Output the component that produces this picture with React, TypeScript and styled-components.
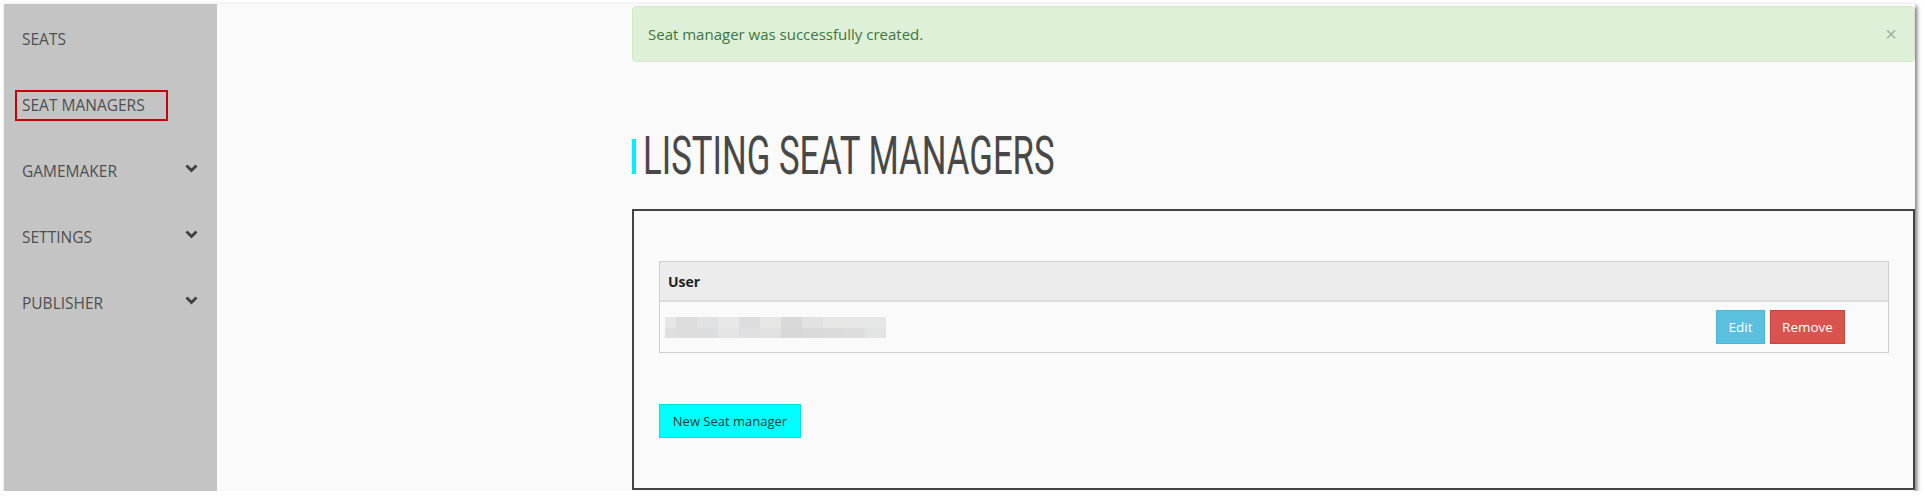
import React from "react";
import styled, { createGlobalStyle } from "styled-components";

const Global = createGlobalStyle`
  html, body { margin: 0; padding: 0; background: #ffffff; }
  body { font-family: "Open Sans", "Noto Sans", Arial, sans-serif; }
  * { box-sizing: border-box; }
`;

const Frame = styled.div`
  margin: 4px 0 0 4px;
  width: 1911px;
  height: 487px;
  display: flex;
  box-shadow: 2px 2px 4px rgba(0, 0, 0, 0.55);
  overflow: hidden;
`;

const Sidebar = styled.nav`
  width: 213px;
  flex: none;
  background: #c4c4c4;
  padding: 20px 0 0 11px;
  display: flex;
  flex-direction: column;
  gap: 36px;
`;

const NavItem = styled.div<{ $active?: boolean }>`
  display: flex;
  align-items: center;
  justify-content: space-between;
  height: 30px;
  width: 183px;
  padding: 0 0 0 7px;
  font-size: 15.5px;
  color: #4f4f4f;
  > span:first-child {
    display: inline-flex;
    align-items: center;
    height: 31px;
    margin-left: -7px;
    padding: 0 21px 0 5px;
    border: 2px solid ${(p) => (p.$active ? "#c70000" : "transparent")};
  }
`;

const Chevron = styled.svg`
  width: 13px;
  height: 9px;
  margin-top: -6px;
`;

const Main = styled.main`
  flex: 1;
  background: #fafafa;
  padding: 2px 0 1px 415px;
  display: flex;
  flex-direction: column;
`;

const Alert = styled.div`
  height: 56px;
  background: #dff0d8;
  border: 1px solid #d6e9c6;
  border-radius: 4px;
  color: #3c763d;
  font-size: 15px;
  display: flex;
  align-items: center;
  justify-content: space-between;
  padding: 0 17px 0 15px;
`;

const Close = styled.span`
  color: #9fb59a;
  font-size: 20px;
  line-height: 1;
  font-family: Arial, sans-serif;
`;

const Heading = styled.h1`
  margin: 74px 0 0 0;
  height: 40px;
  display: flex;
  align-items: center;
  font-weight: 300;
`;

const AccentBar = styled.span`
  width: 4px;
  height: 35px;
  background: #00f0ff;
  margin-right: 7px;
  flex: none;
`;

const HeadingText = styled.span`
  display: inline-block;
  font-family: Roboto, "Open Sans", sans-serif;
  font-weight: 400;
  font-size: 54px;
  line-height: 1;
  color: #484848;
  transform: scaleX(0.643);
  transform-origin: left center;
  white-space: nowrap;
`;

const Panel = styled.section`
  margin-top: 33px;
  flex: 1;
  border: 2px solid #444444;
  padding: 50px 24px 0 25px;
  display: flex;
  flex-direction: column;
`;

const Table = styled.div`
  border: 1px solid #cfcfcf;
  display: flex;
  flex-direction: column;
`;

const HeaderRow = styled.div`
  height: 40px;
  background: #ececec;
  border-bottom: 2px solid #dcdcdc;
  display: flex;
  align-items: center;
  padding: 0 8px;
  font-weight: 700;
  font-size: 14px;
  color: #222;
`;

const BodyRow = styled.div`
  height: 50px;
  display: flex;
  align-items: center;
  justify-content: space-between;
  padding: 0 43px 0 5px;
`;

const Pixels = styled.div`
  display: grid;
  grid-template-columns: 11px repeat(10, 21px);
  grid-template-rows: 11px 10px;
  margin-top: 1px;
`;

const Actions = styled.div`
  display: flex;
  gap: 5px;
`;

const Btn = styled.button<{ $bg: string; $border: string; $w: number }>`
  width: ${(p) => p.$w}px;
  height: 34px;
  background: ${(p) => p.$bg};
  border: 1px solid ${(p) => p.$border};
  color: #ffffff;
  font-family: "Open Sans", sans-serif;
  font-size: 13.5px;
  padding: 0;
  border-radius: 0;
`;

const NewBtn = styled.button`
  margin-top: 51px;
  width: 142px;
  height: 34px;
  background: #00ffff;
  border: 1px solid #00dede;
  color: #1f3a3a;
  font-family: "Open Sans", sans-serif;
  font-size: 13px;
  padding: 0;
  align-self: flex-start;
`;

const pixelColors = [
  "#e6e6e6", "#dcdcdc", "#e1e2e4", "#e8e8e8", "#dcdcde", "#e6e6e4", "#d9d9d9", "#e2e2e2", "#e7e7e5", "#e7e7e7", "#e5e6e6",
  "#dfdfdf", "#dddddd", "#dcdddf", "#e5e5e5", "#e0e0e2", "#e1e1e1", "#d8d8d8", "#dadada", "#dbdbdb", "#dddddd", "#e3e4e4",
];

const ChevronIcon = () => (
  <Chevron viewBox="0 0 13 9">
    <path d="M1.5 1.5 L6.5 6.5 L11.5 1.5" fill="none" stroke="#3f3f3f" strokeWidth="2.8" />
  </Chevron>
);

const navItems: { label: string; active?: boolean; chevron?: boolean }[] = [
  { label: "SEATS" },
  { label: "SEAT MANAGERS", active: true },
  { label: "GAMEMAKER", chevron: true },
  { label: "SETTINGS", chevron: true },
  { label: "PUBLISHER", chevron: true },
];

export default function App() {
  return (
    <>
      <Global />
      <Frame>
        <Sidebar>
          {navItems.map((n) => (
            <NavItem key={n.label} $active={n.active}>
              <span>{n.label}</span>
              {n.chevron && <ChevronIcon />}
            </NavItem>
          ))}
        </Sidebar>
        <Main>
          <Alert>
            <span>Seat manager was successfully created.</span>
            <Close>×</Close>
          </Alert>
          <Heading>
            <AccentBar />
            <HeadingText>LISTING SEAT MANAGERS</HeadingText>
          </Heading>
          <Panel>
            <Table>
              <HeaderRow>User</HeaderRow>
              <BodyRow>
                <Pixels>
                  {pixelColors.map((c, i) => (
                    <div key={i} style={{ background: c }} />
                  ))}
                </Pixels>
                <Actions>
                  <Btn $bg="#5bc0de" $border="#46b8da" $w={49}>Edit</Btn>
                  <Btn $bg="#d9534f" $border="#d43f3a" $w={75}>Remove</Btn>
                </Actions>
              </BodyRow>
            </Table>
            <NewBtn>New Seat manager</NewBtn>
          </Panel>
        </Main>
      </Frame>
    </>
  );
}
